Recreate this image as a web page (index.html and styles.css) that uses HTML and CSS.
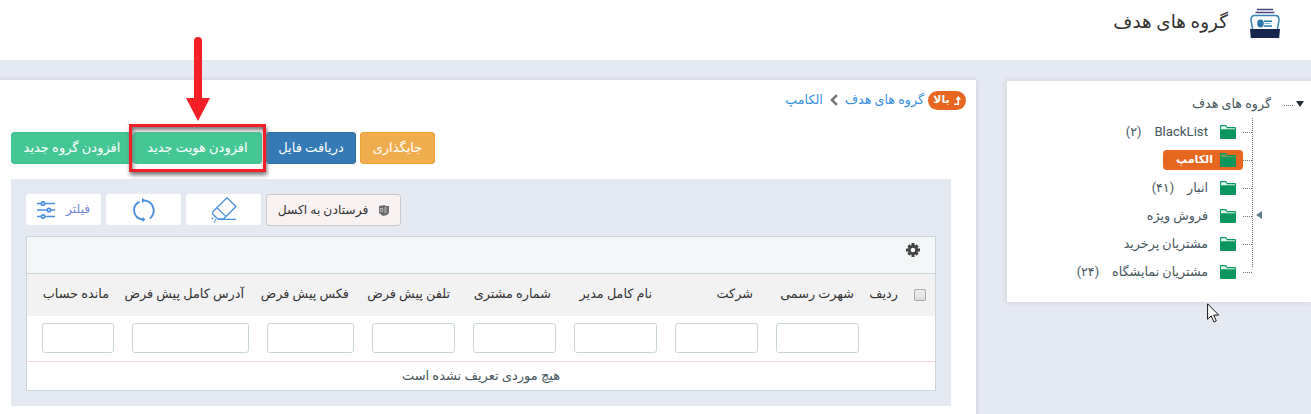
FILE: index.html
```html
<!DOCTYPE html>
<html lang="fa" dir="rtl">
<head>
<meta charset="utf-8">
<title>گروه های هدف</title>
<link rel="stylesheet" href="styles.css">
</head>
<body>
<header class="top">
  <svg class="logo" width="30" height="30" viewBox="0 0 30 30">
    <path d="M7 1.500h16M5.500 4.500h19" stroke="#4a4580" stroke-width="1.700"/>
    <path d="M2.500 21 1 12Q1 8 4 7.500h22Q29 8 29 12l-1.500 9" fill="none" stroke="#2f86b5" stroke-width="1.500"/>
    <ellipse cx="10.500" cy="15.500" rx="3.300" ry="4" fill="#2a78ac"/>
    <path d="M14 13.200h8M14 18h8" stroke="#2a78ac" stroke-width="1.500"/><path d="M14.500 15.600h6" stroke="#6fb2d5"/>
    <path d="M0 21h30l-.8 9H.8z" fill="#17264f"/>
  </svg>
  <h1>گروه های هدف</h1>
</header>
<div class="layout">
  <aside class="side">
    <div class="root"><i class="caret"></i><i class="dots"></i><span>گروه های هدف</span></div>
    <ul class="tree">
      <li><i class="dots"></i><div class="node"><svg class="folder" viewBox="0 0 16 14"><path d="M0 1Q0 0 1 0h5l1.500 2H15q1 0 1 1v10q0 1-1 1H1q-1 0-1-1z"/><path d="M1 4.300V1.300h4.500L7 3.300h8v1z" class="paper"/></svg><span class="latin">BlackList</span><span class="count">(۲)</span></div></li>
      <li><i class="dots"></i><div class="node on"><svg class="folder" viewBox="0 0 16 14"><path d="M0 1Q0 0 1 0h5l1.500 2H15q1 0 1 1v10q0 1-1 1H1q-1 0-1-1z"/><path d="M1 4.300V1.300h4.500L7 3.300h8v1z" class="paper"/></svg><span>الکامپ</span></div></li>
      <li><i class="dots"></i><div class="node"><svg class="folder" viewBox="0 0 16 14"><path d="M0 1Q0 0 1 0h5l1.500 2H15q1 0 1 1v10q0 1-1 1H1q-1 0-1-1z"/><path d="M1 4.300V1.300h4.500L7 3.300h8v1z" class="paper"/></svg><span>انبار</span><span class="count">(۴۱)</span></div></li>
      <li class="parent"><i class="dots"></i><div class="node"><svg class="folder" viewBox="0 0 16 14"><path d="M0 1Q0 0 1 0h5l1.500 2H15q1 0 1 1v10q0 1-1 1H1q-1 0-1-1z"/><path d="M1 4.300V1.300h4.500L7 3.300h8v1z" class="paper"/></svg><span>فروش ویژه</span></div></li>
      <li><i class="dots"></i><div class="node"><svg class="folder" viewBox="0 0 16 14"><path d="M0 1Q0 0 1 0h5l1.500 2H15q1 0 1 1v10q0 1-1 1H1q-1 0-1-1z"/><path d="M1 4.300V1.300h4.500L7 3.300h8v1z" class="paper"/></svg><span>مشتریان پرخرید</span></div></li>
      <li><i class="dots"></i><div class="node"><svg class="folder" viewBox="0 0 16 14"><path d="M0 1Q0 0 1 0h5l1.500 2H15q1 0 1 1v10q0 1-1 1H1q-1 0-1-1z"/><path d="M1 4.300V1.300h4.500L7 3.300h8v1z" class="paper"/></svg><span>مشتریان نمایشگاه</span><span class="count">(۲۴)</span></div></li>
    </ul>
  </aside>
  <main class="main">
    <nav class="crumbs">
      <a class="up"><svg width="7" height="9" viewBox="0 0 7 9"><path d="M0 8.200h4.300V3" fill="none" stroke="#fff" stroke-width="1.600"/><path d="M1.500 3.800 4.300 0 7 3.800z" fill="#fff"/></svg><span>بالا</span></a>
      <a>گروه های هدف</a>
      <svg class="chev" width="8" height="12" viewBox="0 0 8 12"><path d="M6.800 1.200 2 6l4.800 4.800" fill="none" stroke="#777" stroke-width="2.600"/></svg>
      <a>الکامپ</a>
    </nav>
    <div class="actions">
      <button class="btn orange">جایگذاری</button>
      <button class="btn blue">دریافت فایل</button>
      <button class="btn green">افزودن هویت جدید</button>
      <button class="btn green last">افزودن گروه جدید</button>
    </div>
    <section class="panel">
      <div class="tools">
        <button class="excel"><svg width="10" height="11" viewBox="0 0 10 11"><path d="M0 1 6 0v1h4v7L8 10 4 11 0 8z" fill="#6b6b6b"/><path d="M1.300 3.500h2.400v3H1.300zM5 3h3M5 5h3M5 7h3" fill="none" stroke="#ccc" stroke-width=".8"/></svg><span>فرستادن به اکسل</span></button>
        <button class="tool"><svg width="26" height="26" viewBox="0 0 26 26" fill="none" stroke="#4a90e2" stroke-width="1.300"><path d="M2.500 14 16 .8 25 9.500 12.500 22H7L2 17.500q-1-2 .5-3.500zM6 10.800l9 8.800M7 22.300h18"/><path d="M.5 21.500h1.800M5 22.500l-1 1M3 25.500l1-1" stroke-width="1.500"/></svg></button>
        <button class="tool"><svg width="22" height="24" viewBox="0 0 22 24" fill="none" stroke="#4a90e2" stroke-width="1.900"><path d="M6.500 3.600Q1 6.500 1 12q.5 9 10 9.700M10 2.300Q20 3 20.800 12q0 5.500-4 8.500"/><path d="M9 0l3 2.400L9 5zM9.500 19l3 2.600-3 2.400z" fill="#4a90e2" stroke="none"/></svg></button>
        <button class="tool filter"><span>فیلتر</span><svg width="18" height="18" viewBox="0 0 18 18" stroke="#4a90e2" stroke-width="1.700" fill="#fff"><path d="M0 2.500h18M0 9h18M0 15.500h18"/><circle cx="6" cy="2.500" r="1.700"/><circle cx="12" cy="9" r="1.700"/><circle cx="6" cy="15.500" r="1.700"/></svg></button>
      </div>
      <div class="grid">
        <div class="gridbar"><svg width="14" height="14" viewBox="-7 -7 14 14"><g fill="#444"><circle r="5"/><path d="M-1.500-7h3V7h-3z"/><path d="M-1.500-6.500h3v13h-3z" transform="rotate(45)"/><path d="M-1.500-7h3V7h-3z" transform="rotate(90)"/><path d="M-1.500-6.500h3v13h-3z" transform="rotate(135)"/></g><circle r="2.300" fill="#f3f7f8"/></svg></div>
        <div class="row head"><i class="check"></i><b>ردیف</b><b>شهرت رسمی</b><b>شرکت</b><b>نام کامل مدیر</b><b>شماره مشتری</b><b>تلفن پیش فرض</b><b>فکس پیش فرض</b><b>آدرس کامل پیش فرض</b><b>مانده حساب</b></div>
        <div class="row fields"><i></i><i></i><input><input><input><input><input><input><input><input></div>
        <div class="empty">هیچ موردی تعریف نشده است</div>
      </div>
    </section>
  </main>
</div>
<svg class="arrow" width="26" height="86" viewBox="0 0 26 86"><path d="M9 4Q9 0 13 0t4 4v57h8L13 84 1 61h8z" fill="#f52027"/></svg>
<div class="frame"></div>
<svg class="cursor" width="13" height="20" viewBox="0 0 13 20"><path d="M.6.8v15.500l3.600-3.400 2.700 6 2.400-1.100-2.600-5.700h5z" fill="#fff" stroke="#111"/></svg>
</body>
</html>
```
FILE: styles.css
```css
* { box-sizing: border-box; }
body {
  margin: 0;
  height: 414px;
  overflow: hidden;
  position: relative;
  background: #e5e9f2;
  font: 13px/20px Roboto, "DejaVu Sans", sans-serif;
  color: #44565c;
  white-space: nowrap;
}
button, input { font: inherit; margin: 0; padding: 0; }
i { font-style: normal; }
.top { height: 60px; background: #fff; display: flex; padding: 8px 31px 0 0; gap: 22px; }
h1 { margin: 0; font-size: 18.400px; font-weight: 400; line-height: 28px; color: #333; }
.layout { display: flex; gap: 30px; padding-top: 20px; align-items: flex-start; }
.side { width: 305px; height: 223px; background: #fff; border: 1px solid #dcdfe3; border-right: 0; padding-top: 13px; box-shadow: 0 0 4px #cdd1da; font-size: 12.700px; }
.root { display: flex; align-items: center; height: 20px; padding-right: 7px; }
.caret { border: 4px solid transparent; border-top: 6px solid #243039; border-bottom: 0; }
.dots { width: 9px; border-top: 1px dotted #777; flex: none; }
.root .dots { margin: 3px 3px 0 13px; }
.tree { list-style: none; margin: 4px 58px 0 0; padding: 0; position: relative; }
.tree::before { content: ""; position: absolute; right: 0; top: 0; height: 149px; border-right: 1px dotted #777; }
.tree li { height: 28px; display: flex; align-items: center; padding-right: 1px; position: relative; }
.node { display: flex; align-items: center; height: 20px; padding: 0 7px 0 4px; }
.node span { padding-bottom: 1px; }
.folder { width: 16px; height: 14px; fill: #0b965e; margin-left: 12px; }
.paper { fill: #dff5ea; }
.on { background: #e76620; color: #fff; font-size: 11px; font-weight: 700; border-radius: 4px; width: 80px; }
.on .folder { margin-left: 7px; }
.on .paper { fill: #6d9a58; }
.latin { font-size: 13.200px; }
.count { margin-right: 13px; }
.parent::before { content: ""; position: absolute; right: -9px; top: 9px; border: 4px solid transparent; border-right: 6px solid #607d8b; border-left: 0; }
.main { width: 976px; height: 340px; background: #fff; box-shadow: 0 0 5px #c5c9d0; padding: 10px 10px 0 11px; }
.crumbs { height: 20px; display: flex; align-items: center; color: #348fe2; font-size: 12.700px; }
.up { width: 38px; height: 19px; background: #e76620; border-radius: 10px; color: #fff; font-size: 11px; font-weight: 700; display: flex; align-items: center; justify-content: center; gap: 4px; margin-left: 4px; }
.up span { padding-bottom: 1px; }
.chev { margin: 0 7px; }
.actions { display: flex; justify-content: flex-end; margin-top: 22px; }
.btn { height: 32px; border-radius: 3px; border: 1px solid; color: #fff; font-weight: 500; }
.orange { width: 75px; background: #f0ad4e; border-color: #eea236; margin-left: 4px; }
.blue { width: 90px; background: #337ab7; border-color: #2e6da4; margin-left: 4px; }
.green { width: 129px; background: #45c795; border-color: #42c08f; }
.last { width: 122px; }
.panel { width: 940px; height: 227px; background: #e5e9f2; margin: 15px 15px 0 0; padding: 15px 15px 0 15px; }
.tools { display: flex; justify-content: flex-end; gap: 5px; }
.tool { width: 75px; height: 31px; background: #fff; border: 0; border-radius: 3px; display: flex; align-items: center; justify-content: center; }
.filter { color: #7288d8; gap: 11px; font-size: 12.300px; }
.filter span { padding-bottom: 2px; }
.excel { width: 135px; height: 32px; background: #f8f3f2; border: 1px solid #c9c9c9; border-radius: 3px; color: #333; font-size: 12.300px; display: flex; align-items: center; justify-content: center; gap: 11px; }
.grid { border: 1px solid #cbd5db; height: 155px; margin-top: 10px; background: #fff; }
.gridbar { height: 37px; border-bottom: 1px solid #cbd5db; background: #f3f7f8; padding: 6px 15px 0 0; }
.gridbar svg { display: block; }
.row { display: grid; grid-template-columns: 32px 35px repeat(5, 101px) 105px 135px 90px; align-items: center; }
.head { height: 42px; background: #f2f2f2; color: #333; font-size: 12.800px; }
.head b { font-weight: 400; padding: 0 14px 2px 0; }
.head b:nth-child(2) { padding-right: 5px; }
.check { width: 12px; height: 12px; border: 1px solid #aaa; border-radius: 2px; background: linear-gradient(#eee, #ddd); margin-right: 9px; }
.fields { height: 46px; border-bottom: 1px solid #f5d7d5; padding-bottom: 1px; }
.fields input { height: 30px; border: 1px solid #c8d5dc; border-radius: 3px; margin: 0 9px; min-width: 0; background: #fff; }
.empty { text-align: center; line-height: 27px; }
.arrow { position: absolute; left: 185px; top: 37px; }
.frame { position: absolute; left: 129px; top: 124px; width: 137px; height: 48px; border: 3px solid #f52027; box-shadow: 1px 3px 4px #777, inset 1px 3px 4px #777; }
.cursor { position: absolute; left: 1207px; top: 303px; }
```
